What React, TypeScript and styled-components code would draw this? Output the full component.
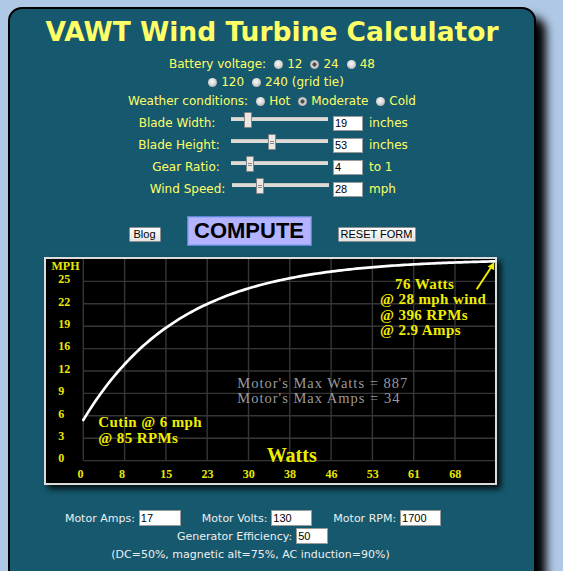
import React from "react";
import styled, { createGlobalStyle } from "styled-components";

const GlobalStyle = createGlobalStyle`
  html, body { margin: 0; padding: 0; background: #afc8e5; overflow: hidden; }
  body { font-family: "DejaVu Sans", Verdana, sans-serif; }
`;

const Page = styled.div`
  padding: 7px 0 0 8px;
`;

const Panel = styled.div`
  width: 524px;
  border: 2px solid #000;
  border-radius: 14px;
  background: #16596e;
  box-shadow: 10px 10px 10px #000;
  padding-bottom: 40px;
  display: flex;
  flex-direction: column;
  align-items: center;
`;

const Title = styled.h1`
  margin: 8px 0 0;
  font-family: "DejaVu Sans", Verdana, sans-serif;
  font-weight: bold;
  font-size: 26.5px;
  line-height: 30px;
  color: #ffff66;
`;

const OptionRow = styled.div<{ $top: number }>`
  margin-top: ${(p) => p.$top}px;
  display: flex;
  align-items: center;
  justify-content: center;
  height: 18px;
  font-size: 12px;
  color: #ffff66;
`;

const OptionLabel = styled.span``;

const Option = styled.label`
  display: inline-flex;
  align-items: center;
  margin-left: 8px;
`;

const Radio = styled.span<{ $checked?: boolean }>`
  display: inline-block;
  width: 9px;
  height: 9px;
  border-radius: 50%;
  margin-right: 4px;
  background: ${(p) =>
    p.$checked
      ? "radial-gradient(circle at 50% 50%, #4a4a4a 0 1.8px, #dedede 2.4px, #b5b5b5 4px, #8d8d8d 100%)"
      : "radial-gradient(circle at 45% 40%, #fbfbfb 0, #d9d9d9 45%, #a8a8a8 85%, #8a8a8a 100%)"};
`;

const SliderGrid = styled.div`
  margin-top: 2px;
  display: grid;
  grid-template-columns: 98px 104px 36px 44px;
  grid-auto-rows: 22px;
  align-items: center;
  font-size: 12px;
  color: #ffff66;
`;

const RowLabel = styled.span<{ $shift: number }>`
  text-align: center;
  margin-left: ${(p) => p.$shift * 2}px;
  white-space: nowrap;
`;

const SliderCell = styled.div<{ $dx: number }>`
  position: relative;
  align-self: start;
  width: 97px;
  height: 16px;
  margin: 0 0 0 ${(p) => 2 + p.$dx}px;
`;

const Track = styled.div`
  margin-top: 5px;
  height: 3px;
  background: #dedad5;
  border-top: 1px solid #c9c5bf;
`;

const Thumb = styled.div<{ $grip?: boolean }>`
  position: absolute;
  top: 0;
  width: 6px;
  height: 14px;
  background: #ebe8e3;
  border: 1px solid #858585;
  border-radius: 1px;
  display: flex;
  align-items: center;
  justify-content: center;
  &::after {
    content: "";
    display: ${(p) => (p.$grip ? "block" : "none")};
    width: 4px;
    height: 1px;
    border-top: 1px solid #8a8a8a;
    border-bottom: 1px solid #8a8a8a;
  }
`;

const TextBox = styled.input<{ $w: number; $h: number }>`
  box-sizing: border-box;
  width: ${(p) => p.$w}px;
  height: ${(p) => p.$h}px;
  margin: 0;
  padding: 0 1px;
  border: 1px solid #9a9a9a;
  background: #fff;
  color: #000;
  font-family: "Liberation Sans", Arial, sans-serif;
  font-size: 11px;
  outline: none;
`;

const Unit = styled.span``;

const ButtonRow = styled.div`
  margin-top: 16px;
  display: flex;
  align-items: flex-end;
  gap: 26px;
`;

const SmallButton = styled.button<{ $w: number }>`
  box-sizing: border-box;
  width: ${(p) => p.$w}px;
  height: 15px;
  margin: 0 0 4px;
  padding: 0;
  border: 1px solid #8f8f8f;
  border-radius: 1px;
  background: linear-gradient(#fbfbfb, #e4e4e4);
  color: #000;
  font-family: "Liberation Sans", Arial, sans-serif;
  font-size: 11px;
  line-height: 13px;
`;

const ComputeButton = styled.button`
  box-sizing: border-box;
  width: 125px;
  height: 30px;
  margin: 0;
  padding: 0;
  border: 1px solid #5f86d4;
  box-shadow: inset 0 0 0 1px #9aa6f0;
  background: #b3b3ff;
  color: #000;
  font-family: "Liberation Sans", Arial, sans-serif;
  font-weight: bold;
  font-size: 22px;
  line-height: 28px;
`;

const ChartBox = styled.div`
  margin: 11px 3px 0 0;
  width: 449px;
  height: 224px;
  border: 2px solid #dcdcdc;
  background: #000;
  box-shadow: 4px 4px 6px rgba(0, 0, 0, 0.85);
`;

const ChartSvg = styled.svg`
  display: block;
`;

const AxisText = styled.text`
  font-family: "Liberation Serif", "Times New Roman", serif;
  font-weight: bold;
  font-size: 12px;
  fill: #e8e800;
`;

const NoteText = styled.text`
  font-family: "Liberation Serif", "Times New Roman", serif;
  font-weight: bold;
  font-size: 15px;
  letter-spacing: 0.4px;
  fill: #eeee00;
`;

const GrayText = styled.text`
  font-family: "Liberation Serif", "Times New Roman", serif;
  font-size: 14.5px;
  letter-spacing: 1px;
  fill: #9a9a9a;
`;

const BigAxisText = styled.text`
  font-family: "Liberation Serif", "Times New Roman", serif;
  font-weight: bold;
  font-size: 20px;
  fill: #eeee00;
`;

const FormRow = styled.div<{ $top: number; $offset: number }>`
  margin: ${(p) => p.$top}px ${(p) => p.$offset}px 0 0;
  display: flex;
  align-items: center;
  justify-content: center;
  height: 18px;
  font-size: 11px;
  color: #eeeeee;
  gap: 21px;
`;

const Field = styled.span`
  display: inline-flex;
  align-items: center;
  gap: 4px;
`;

const sliders = [
  { label: "Blade Width:", shift: -3, value: "19", unit: "inches", thumb: 13, grip: false, dx: 0 },
  { label: "Blade Height:", shift: -1, value: "53", unit: "inches", thumb: 36.5, grip: true, dx: 0 },
  { label: "Gear Ratio:", shift: 6, value: "4", unit: "to 1", thumb: 14.5, grip: true, dx: 0 },
  { label: "Wind Speed:", shift: 7.5, value: "28", unit: "mph", thumb: 23.5, grip: true, dx: 1 },
];

const gridX = Array.from({ length: 10 }, (_, k) => 37.3 + 41.3 * k);
const gridY = Array.from({ length: 9 }, (_, j) => 22.4 * (j + 1));
const yLabels = ["25", "22", "19", "16", "12", "9", "6", "3", "0"];
const xLabels = ["0", "8", "15", "23", "30", "38", "46", "53", "61", "68"];

function curvePath(): string {
  const pts: string[] = [];
  for (let x = 37.3; x <= 449.01; x += 3) {
    const y = 161 * Math.exp((-0.425 * (x - 37.3)) / 41.3);
    pts.push(`${x.toFixed(2)},${y.toFixed(2)}`);
  }
  pts.push(`449,${(161 * Math.exp((-0.425 * (449 - 37.3)) / 41.3)).toFixed(2)}`);
  return "M" + pts.join(" L");
}

function Chart() {
  return (
    <ChartBox>
      <ChartSvg width="449" height="224" viewBox="0 0 449 224">
        <g stroke="#363636" strokeWidth="1.4">
          {gridX.map((x) => (
            <line key={"v" + x} x1={x} y1={0} x2={x} y2={201.6} />
          ))}
          {gridY.map((y) => (
            <line key={"h" + y} x1={37.3} y1={y} x2={449} y2={y} />
          ))}
        </g>
        <AxisText x={5.5} y={11}>MPH</AxisText>
        {yLabels.map((t, j) => (
          <AxisText key={"y" + t} x={12.3} y={gridY[j] + 1.8}>
            {t}
          </AxisText>
        ))}
        {xLabels.map((t, k) => (
          <AxisText key={"x" + t} x={gridX[k] - 5.7} y={218.5}>
            {t}
          </AxisText>
        ))}
        <path d={curvePath()} fill="none" stroke="#fff" strokeWidth="2.7" strokeLinecap="round" strokeLinejoin="round" />
        <line x1={430.7} y1={30.3} x2={446} y2={7} stroke="#eeee00" strokeWidth="2" />
        <polygon points="448.2,3.2 448.2,11.2 441.6,7.5" fill="#eeee00" />
        <NoteText x={349} y={30.3}>76 Watts</NoteText>
        <NoteText x={334} y={45.4}>@ 28 mph wind</NoteText>
        <NoteText x={334} y={60.5}>@ 396 RPMs</NoteText>
        <NoteText x={334} y={75.6}>@ 2.9 Amps</NoteText>
        <GrayText x={191.3} y={128.5}>Motor's Max Watts = 887</GrayText>
        <GrayText x={191.3} y={143.5}>Motor's Max Amps = 34</GrayText>
        <NoteText x={52.3} y={168.3}>Cutin @ 6 mph</NoteText>
        <NoteText x={52.3} y={183.6}>@ 85 RPMs</NoteText>
        <BigAxisText x={220.7} y={202.5}>Watts</BigAxisText>
      </ChartSvg>
    </ChartBox>
  );
}

export default function App() {
  return (
    <>
      <GlobalStyle />
      <Page>
        <Panel>
          <Title>VAWT Wind Turbine Calculator</Title>
          <OptionRow $top={8}>
            <OptionLabel>Battery voltage:</OptionLabel>
            <Option>
              <Radio />12
            </Option>
            <Option>
              <Radio $checked />24
            </Option>
            <Option>
              <Radio />48
            </Option>
          </OptionRow>
          <OptionRow $top={0}>
            <Option>
              <Radio />120
            </Option>
            <Option>
              <Radio />240 (grid tie)
            </Option>
          </OptionRow>
          <OptionRow $top={1}>
            <OptionLabel>Weather conditions:</OptionLabel>
            <Option>
              <Radio />Hot
            </Option>
            <Option>
              <Radio $checked />Moderate
            </Option>
            <Option>
              <Radio />Cold
            </Option>
          </OptionRow>
          <SliderGrid>
            {sliders.map((s) => (
              <React.Fragment key={s.label}>
                <RowLabel $shift={s.shift}>{s.label}</RowLabel>
                <SliderCell $dx={s.dx}>
                  <Track />
                  <Thumb $grip={s.grip} style={{ left: s.thumb }} />
                </SliderCell>
                <TextBox $w={30} $h={15} value={s.value} readOnly />
                <Unit>{s.unit}</Unit>
              </React.Fragment>
            ))}
          </SliderGrid>
          <ButtonRow>
            <SmallButton $w={32}>Blog</SmallButton>
            <ComputeButton>COMPUTE</ComputeButton>
            <SmallButton $w={78}>RESET FORM</SmallButton>
          </ButtonRow>
          <Chart />
          <FormRow $top={24} $offset={38}>
            <Field>
              Motor Amps:
              <TextBox $w={42} $h={16} value="17" readOnly />
            </Field>
            <Field>
              Motor Volts:
              <TextBox $w={41} $h={16} value="130" readOnly />
            </Field>
            <Field>
              Motor RPM:
              <TextBox $w={41} $h={16} value="1700" readOnly />
            </Field>
          </FormRow>
          <FormRow $top={0} $offset={39}>
            <Field>
              Generator Efficiency:
              <TextBox $w={32} $h={16} value="50" readOnly />
            </Field>
          </FormRow>
          <FormRow $top={0} $offset={43}>
            (DC=50%, magnetic alt=75%, AC induction=90%)
          </FormRow>
        </Panel>
      </Page>
    </>
  );
}
